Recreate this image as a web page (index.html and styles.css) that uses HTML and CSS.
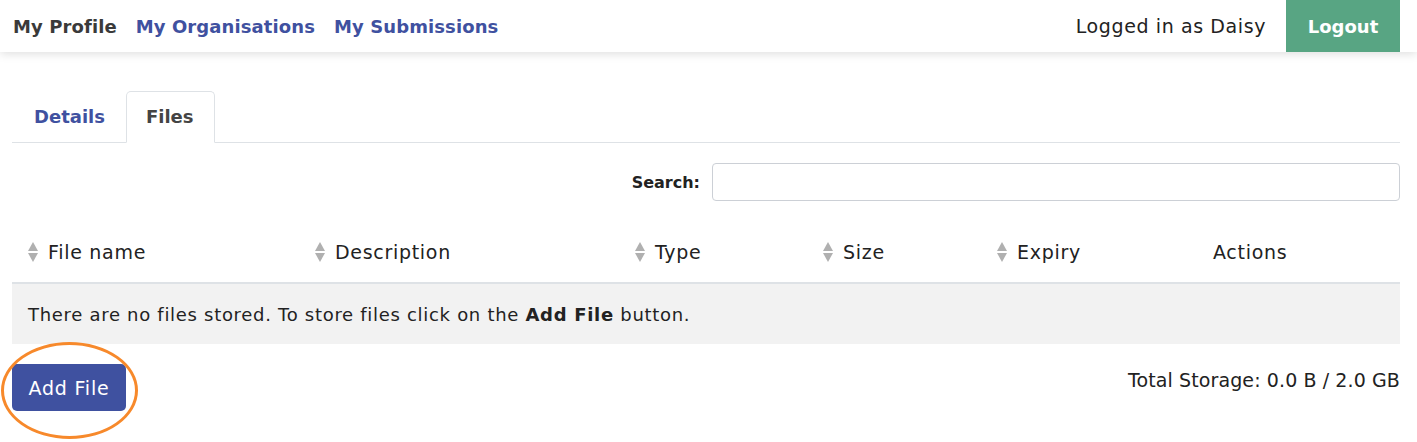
FILE: index.html
```html
<!doctype html>
<html>

<head>
    <title>My Profile - Files</title>
    <meta charset="UTF-8">
    <link rel="stylesheet" href="styles.css">
</head>

<body>
    <header class="topbar">
        <nav class="mainnav">
            <a class="current" href="#">My Profile</a>
            <a href="#">My Organisations</a>
            <a href="#">My Submissions</a>
        </nav>
        <div class="userbox">
            <span class="who">Logged in as Daisy</span>
            <a class="logout" href="#">Logout</a>
        </div>
    </header>

    <main class="page">
        <ul class="tabs">
            <li><a href="#">Details</a></li>
            <li class="active"><a href="#">Files</a></li>
        </ul>

        <div class="searchrow">
            <label for="q">Search:</label>
            <input id="q" type="search">
        </div>

        <table class="files">
            <thead>
                <tr>
                    <th class="c-name"><span class="sort"></span>File name</th>
                    <th class="c-desc"><span class="sort"></span>Description</th>
                    <th class="c-type"><span class="sort"></span>Type</th>
                    <th class="c-size"><span class="sort"></span>Size</th>
                    <th class="c-exp"><span class="sort"></span>Expiry</th>
                    <th class="c-act">Actions</th>
                </tr>
            </thead>
            <tbody>
                <tr class="empty">
                    <td colspan="6">There are no files stored. To store files click on the <b>Add File</b> button.</td>
                </tr>
            </tbody>
        </table>

        <div class="footrow">
            <div class="addwrap">
                <button class="addbtn" type="button">Add File</button>
                <!-- annotation ring from the screenshot -->
                <span class="ring"></span>
            </div>
            <span class="storage">Total Storage: 0.0 B / 2.0 GB</span>
        </div>
    </main>
</body>

</html>
```

FILE: styles.css
```css
body {
    margin: 0;
    font-family: "DejaVu Sans", "Open Sans", sans-serif;
    color: #222;
    background: #fff;
}

a {
    text-decoration: none;
}

.topbar {
    display: flex;
    justify-content: space-between;
    align-items: stretch;
    height: 52px;
    padding: 0 17px 0 13px;
    box-shadow: 0 2px 9px rgba(0, 0, 0, 0.13);
    position: relative;
}

.mainnav {
    display: flex;
    align-items: center;
    gap: 19px;
}

.mainnav a {
    font-size: 18px;
    font-weight: 600;
    color: #3f51a0;
    letter-spacing: 0.1px;
}

.mainnav a.current {
    color: #3a3a3a;
}

.userbox {
    display: flex;
    align-items: stretch;
    gap: 20px;
}

.who {
    display: flex;
    align-items: center;
    font-size: 19px;
    letter-spacing: 0.6px;
    color: #222;
}

.logout {
    display: flex;
    align-items: center;
    justify-content: center;
    width: 114px;
    background: #58a583;
    color: #fff;
    font-weight: bold;
    font-size: 18px;
}

.page {
    padding: 39px 17px 40px 12px;
}

.tabs {
    display: flex;
    margin: 0;
    padding: 0;
    list-style: none;
    border-bottom: 1px solid #dee2e6;
}

.tabs li {
    margin-bottom: -1px;
}

.tabs a {
    display: block;
    height: 50px;
    line-height: 50px;
    padding: 0 20px 0 21px;
    font-size: 18px;
    font-weight: 600;
    color: #3f51a0;
    border: 1px solid transparent;
    border-radius: 5px 5px 0 0;
}

.tabs .active a {
    padding: 0 20px 0 19px;
    color: #444;
    background: #fff;
    border-color: #dee2e6 #dee2e6 #fff;
}

.searchrow {
    display: flex;
    justify-content: flex-end;
    align-items: center;
    gap: 12px;
    margin-top: 20px;
}

.searchrow label {
    font-size: 16px;
    font-weight: 600;
    color: #222;
}

.searchrow input {
    width: 688px;
    height: 38px;
    box-sizing: border-box;
    border: 1px solid #ccd0d6;
    border-radius: 4px;
    outline: none;
}

.files {
    width: 100%;
    table-layout: fixed;
    border-collapse: collapse;
    margin-top: 21px;
}

.files th {
    height: 60px;
    padding: 0 0 0 16px;
    text-align: left;
    font-size: 19px;
    font-weight: normal;
    letter-spacing: 0.7px;
    color: #222;
    border-bottom: 2px solid #dee2e6;
    white-space: nowrap;
}

/* widths exclude the 16px left padding of each cell */
.c-name { width: 271px; }
.c-desc { width: 304px; }
.c-type { width: 172px; }
.c-size { width: 158px; }
.c-exp { width: 200px; }
.c-act { width: 187px; }

.sort {
    display: inline-block;
    vertical-align: middle;
    position: relative;
    width: 10px;
    height: 20px;
    margin: -3px 10px 0 0;
}

.sort::before,
.sort::after {
    content: "";
    position: absolute;
    left: 0;
    border-left: 5px solid transparent;
    border-right: 5px solid transparent;
}

.sort::before {
    top: 0;
    border-bottom: 9px solid #b0b0b0;
}

.sort::after {
    bottom: 0;
    border-top: 9px solid #b0b0b0;
}

.empty td {
    height: 60px;
    padding: 0 16px;
    background: #f2f2f2;
    font-size: 18px;
    letter-spacing: 0.7px;
    color: #222;
}

.footrow {
    display: flex;
    justify-content: space-between;
    align-items: flex-start;
    margin-top: 20px;
}

.addwrap {
    position: relative;
}

.addbtn {
    width: 114px;
    height: 47px;
    border: 0;
    border-radius: 5px;
    background: #3f51a0;
    color: #fff;
    font-family: inherit;
    font-size: 19px;
    letter-spacing: 0.8px;
}

.ring {
    position: absolute;
    left: -11px;
    top: -22px;
    width: 131px;
    height: 91px;
    border: 3px solid #f7892b;
    border-radius: 50%;
    pointer-events: none;
}

.storage {
    margin-top: 5px;
    font-size: 19px;
    letter-spacing: 0.1px;
    color: #222;
}
```
